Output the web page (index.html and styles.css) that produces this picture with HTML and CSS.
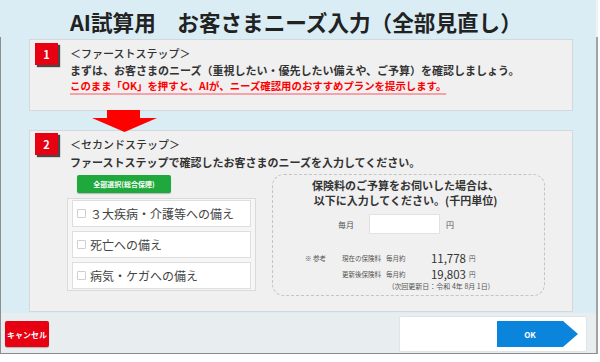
FILE: index.html
```html
<!DOCTYPE html>
<html lang="ja">
<head>
<meta charset="utf-8">
<title>AI試算用 お客さまニーズ入力</title>
<link rel="stylesheet" href="styles.css">
</head>
<body>
<div class="screen">
  <header class="head">
    <h1>AI試算用　お客さまニーズ入力（全部見直し）</h1>
  </header>
  <main class="main">
    <section class="panel p1">
      <div class="badge">1</div>
      <div class="ptext">
        <p>＜ファーストステップ＞</p>
        <p>まずは、お客さまのニーズ（重視したい・優先したい備えや、ご予算）を確認しましょう。</p>
        <p class="red"><span>このまま「OK」を押すと、AIが、ニーズ確認用のおすすめプランを提示します。</span></p>
      </div>
    </section>
    <div class="arrow">
      <svg width="65" height="22" viewBox="0 0 65 22"><polygon points="15,0 48,0 48,8 65,8 32.5,22 0,8 15,8" fill="#ff0000"/></svg>
    </div>
    <section class="panel p2">
      <div class="p2top">
        <div class="badge">2</div>
        <div class="ptext t2">
          <p>＜セカンドステップ＞</p>
          <p>ファーストステップで確認したお客さまのニーズを入力してください。</p>
        </div>
      </div>
      <div class="p2body">
        <div class="leftcol">
          <button class="allbtn">全部選択(総合保障)</button>
          <ul class="checks">
            <li><span class="cb"></span>３大疾病・介護等への備え</li>
            <li><span class="cb"></span>死亡への備え</li>
            <li><span class="cb"></span>病気・ケガへの備え</li>
          </ul>
        </div>
        <div class="budget">
          <p class="bq">保険料のご予算をお伺いした場合は、<br>以下に入力してください。(千円単位)</p>
          <div class="inrow">
            <span class="lbl">毎月</span>
            <span class="inbox"></span>
            <span class="lbl yen">円</span>
          </div>
          <div class="ref r1">
            <span class="note">※ 参考</span>
            <span class="rl">現在の保険料</span>
            <span class="rm">毎月約</span>
            <span class="val">11,778</span>
            <span class="ry">円</span>
          </div>
          <div class="ref r2">
            <span class="note"></span>
            <span class="rl">更新後保険料</span>
            <span class="rm">毎月約</span>
            <span class="val">19,803</span>
            <span class="ry">円</span>
          </div>
          <div class="next">(次回更新日：令和 4年 8月 1日)</div>
        </div>
      </div>
    </section>
  </main>
  <footer class="foot">
    <button class="cancel">キャンセル</button>
    <div class="okbox"><button class="ok">OK</button></div>
  </footer>
</div>
</body>
</html>
```
FILE: styles.css
```css
* { box-sizing: border-box; }
html, body { margin: 0; padding: 0; background: #fff; }
body {
  font-family: "Noto Sans CJK JP", "Noto Sans", sans-serif;
  color: #333;
}
p { margin: 0; }
button { font-family: inherit; border: 0; padding: 0; cursor: pointer; }

.screen { width: 600px; height: 362px; background: #fff; }

.head {
  width: 598px;
  height: 37px;
  background: #daedf4;
  border-right: 2px solid #eef4f6;
  padding: 8px 0 0 70px;
}
.head h1 {
  margin: 0;
  font-size: 21.6px;
  line-height: 28px;
  font-weight: 700;
  color: #222;
}

.main {
  width: 598px;
  height: 276px;
  background: #daedf4;
  border-left: 1px solid #8e8e8e;
  border-right: 2px solid #a3a3a3;
  padding: 2px 0 0 28px;
}

.panel {
  width: 544px;
  background: #f0f0f0;
  border: 1px solid #d2d8db;
}
.p1 {
  height: 72px;
  display: flex;
  padding: 3px 0 0 5px;
}
.badge {
  width: 23px;
  height: 22px;
  flex: none;
  background: #e60012;
  color: #fff;
  font-size: 11px;
  font-weight: 700;
  display: flex;
  align-items: center;
  justify-content: center;
  box-shadow: 2px 2px 1px rgba(0,0,0,0.7);
}
.ptext {
  margin-left: 12px;
  padding-top: 2px;
  font-size: 11px;
  line-height: 16.5px;
  font-weight: 700;
  color: #333;
  white-space: nowrap;
}
.ptext p:first-child { font-weight: 500; }
.red { color: #ff0000; font-size: 10.4px; }
.red span {
  text-decoration: underline;
  text-decoration-color: #f4a3ab;
  text-decoration-thickness: 2px;
  text-underline-offset: 3px;
}

.arrow {
  position: relative;
  z-index: 1;
  height: 20px;
  margin-left: 63px;
}
.arrow svg { display: block; overflow: visible; margin-top: -1px; }

.p2 {
  height: 182px;
  padding: 2px 0 0 5px;
}
.p2top { display: flex; }
.t2 { line-height: 18px; }

.p2body {
  display: flex;
  margin-top: 3px;
}
.leftcol {
  width: 189px;
  margin-left: 32px;
}
.allbtn {
  display: block;
  width: 94px;
  height: 18px;
  margin: 1px 0 0 10px;
  background: #1fa83b;
  color: #fff;
  font-size: 7px;
  font-weight: 700;
  border-radius: 2px;
  box-shadow: 0 1px 1px rgba(0,0,0,0.25);
}
.checks {
  list-style: none;
  margin: 5px 0 0;
  padding: 1px 4px;
  background: #f6f6f6;
  border: 1px solid #dadada;
  display: flex;
  flex-direction: column;
  gap: 4px;
}
.checks li {
  height: 27px;
  background: #fff;
  border: 1px solid #dedede;
  display: flex;
  align-items: center;
  padding-left: 4px;
  font-size: 12px;
  color: #444;
}
.cb {
  width: 9px;
  height: 9px;
  border: 1px solid #cfcfcf;
  border-radius: 1px;
  margin-right: 4px;
  background: #fff;
}

.budget {
  width: 273px;
  height: 122px;
  margin-left: 16px;
  border: 1px dashed #c4c4c4;
  border-radius: 12px;
  padding-top: 3px;
}
.bq {
  text-align: center;
  font-size: 11px;
  line-height: 15px;
  font-weight: 700;
  color: #333;
  padding-right: 6px;
}
.inrow {
  display: flex;
  align-items: center;
  margin-top: 6px;
  padding-left: 65px;
  height: 20px;
}
.lbl { font-size: 8px; color: #555; width: 16px; }
.inbox {
  width: 71px;
  height: 20px;
  margin-left: 15px;
  background: #fff;
  border: 1px solid #e2e2e2;
}
.yen { margin-left: 6px; }

.ref {
  display: flex;
  align-items: center;
  height: 14px;
  padding-left: 32px;
  font-size: 6.5px;
  color: #555;
}
.r1 { margin-top: 17px; }
.r2 { margin-top: 2px; }
.note { width: 37px; }
.rl { width: 44px; }
.rm { width: 23px; }
.val {
  width: 57px;
  text-align: right;
  font-size: 11.5px;
  color: #333;
}
.ry { margin-left: 3px; }
.next {
  height: 10px;
  line-height: 10px;
  padding-left: 119px;
  font-size: 7px;
  color: #555;
  white-space: nowrap;
}

.foot {
  width: 598px;
  height: 41px;
  background: #e8edf0;
  border-left: 1px solid #8e8e8e;
  border-right: 2px solid #a3a3a3;
  border-bottom: 1px solid #8a8a8a;
  display: flex;
  align-items: flex-start;
}
.cancel {
  width: 44px;
  height: 26px;
  margin: 8px 0 0 4px;
  background: #e60012;
  color: #fff;
  font-size: 8px;
  font-weight: 700;
  border-radius: 2px;
  box-shadow: 0 1px 1px rgba(0,0,0,0.25);
}
.okbox {
  width: 188px;
  height: 36px;
  margin: 3px 0 0 350px;
  background: #fff;
  border: 1px solid #dfe4e6;
  border-radius: 2px;
  padding: 4px 0 0 97px;
}
.ok {
  display: block;
  width: 81px;
  height: 26px;
  background: #0b85db;
  color: #fff;
  font-size: 8px;
  font-weight: 700;
  padding-right: 15px;
  clip-path: polygon(0 0, 81.5% 0, 100% 50%, 81.5% 100%, 0 100%);
}
```
